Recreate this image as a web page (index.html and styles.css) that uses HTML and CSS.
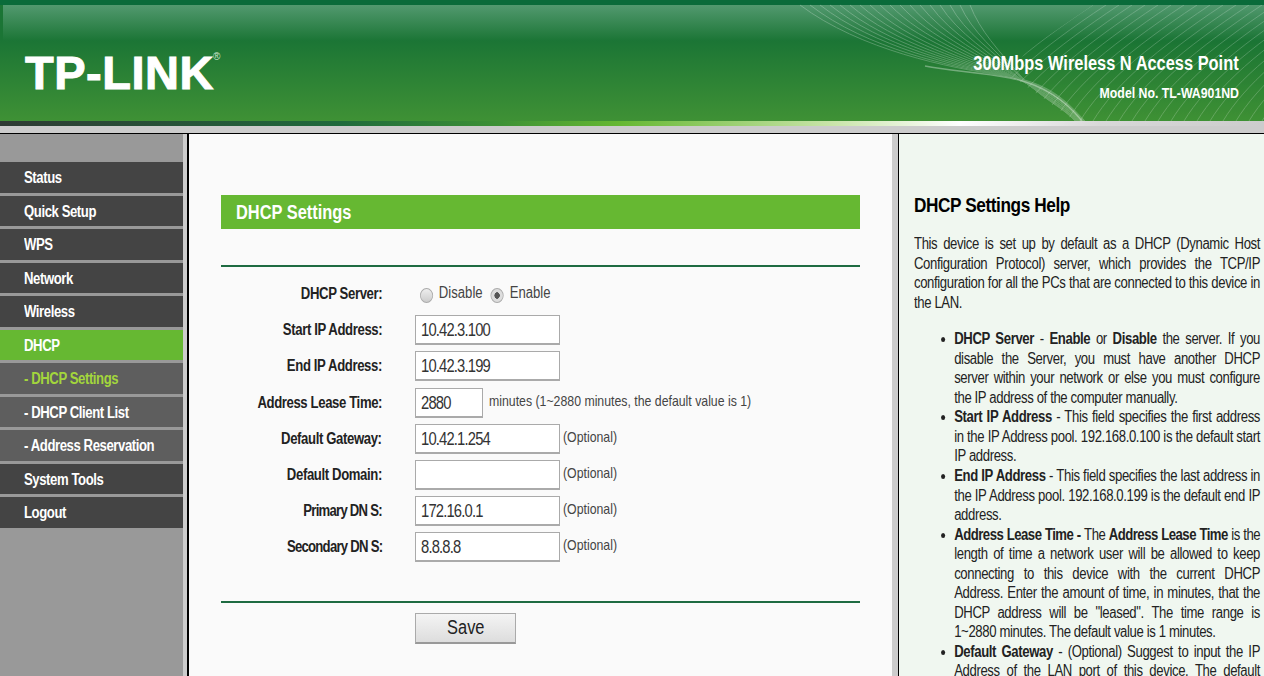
FILE: index.html
```html
<!DOCTYPE html>
<html lang="en">
<head>
    <meta charset="UTF-8">
    <title>TL-WA901ND</title>
    <link rel="stylesheet" href="styles.css">
</head>
<body>
    <div class="banner">
        <div class="banner-shine"></div>
        <svg class="waves" viewBox="0 0 1264 121">
            <defs>
                <path id="wave" d="M963 121C985 85 1025 50 1093 5"/>
                <clipPath id="right-fan"><polygon points="1093,5 1027,50 1010,75 1075,121 1264,121 1264,5"/></clipPath>
            </defs>
            <!-- left fan -->
            <g fill="none" stroke="#fff" stroke-width="1" opacity="0.24">
                <path d="M800 5C860 50 950 68 1000 75S1065 100 1085 121"/>
                <path d="M810 5C867 49 953 67 1001 75S1065 100 1084 121"/>
                <path d="M820 5C874 47 956 66 1002 75S1065 100 1084 121"/>
                <path d="M830 5C881 46 959 65 1003 75S1064 101 1083 121"/>
                <path d="M840 5C888 45 962 64 1005 75S1064 101 1083 121"/>
                <path d="M850 5C895 44 965 63 1006 75S1064 101 1082 121"/>
                <path d="M860 5C902 43 968 62 1007 75S1063 102 1082 121"/>
                <path d="M870 5C909 42 971 61 1008 75S1063 102 1081 121"/>
                <path d="M880 5C916 40 974 60 1009 75S1063 102 1081 121"/>
                <path d="M890 5C923 39 977 59 1010 75S1062 103 1080 121"/>
                <path d="M900 5C930 38 980 58 1011 75S1062 103 1080 121"/>
                <path d="M910 5C937 37 983 57 1013 75S1062 103 1079 121"/>
                <path d="M920 5C944 36 986 56 1014 75S1061 104 1078 121"/>
                <path d="M930 5C951 35 989 55 1015 75S1061 104 1078 121"/>
                <path d="M940 5C958 34 992 54 1016 75S1061 104 1077 121"/>
                <path d="M950 5C965 33 995 53 1018 75S1060 105 1076 121"/>
                <path d="M960 5C972 32 997 52 1019 75S1060 105 1076 121"/>
                <path d="M970 5C980 31 999 51 1020 75S1060 105 1075 121"/>
            </g>
            <!-- right fan -->
            <g fill="none" stroke="#fff" stroke-width="1" opacity="0.2" clip-path="url(#right-fan)">
                <use href="#wave"/>
                <use href="#wave" x="13"/>
                <use href="#wave" x="26"/>
                <use href="#wave" x="39"/>
                <use href="#wave" x="52"/>
                <use href="#wave" x="65"/>
                <use href="#wave" x="78"/>
                <use href="#wave" x="91"/>
                <use href="#wave" x="104"/>
                <use href="#wave" x="117"/>
                <use href="#wave" x="130"/>
                <use href="#wave" x="143"/>
                <use href="#wave" x="156"/>
                <use href="#wave" x="169"/>
                <use href="#wave" x="182"/>
                <use href="#wave" x="195"/>
                <use href="#wave" x="208"/>
                <use href="#wave" x="221"/>
                <use href="#wave" x="234"/>
                <use href="#wave" x="247"/>
                <use href="#wave" x="260"/>
                <use href="#wave" x="273"/>
                <use href="#wave" x="286"/>
                <use href="#wave" x="299"/>
            </g>
            <path d="M925 66C950 71 980 72 1010 78S1065 100 1082 121" fill="none" stroke="#fff" stroke-width="1.5" opacity="0.35"/>
        </svg>
        <div class="logo">TP-LINK<sup>®</sup></div>
        <div class="product">
            <div class="product-name"><span class="nar nar-r">300Mbps Wireless N Access Point</span></div>
            <div class="product-model"><span class="nar nar-r">Model No. TL-WA901ND</span></div>
        </div>
    </div>
    <div class="banner-edge"></div>
    <div class="banner-gap"></div>

    <div class="frames">
        <nav class="menu">
            <a class="item"><span class="nar">Status</span></a>
            <a class="item"><span class="nar">Quick Setup</span></a>
            <a class="item"><span class="nar">WPS</span></a>
            <a class="item"><span class="nar">Network</span></a>
            <a class="item"><span class="nar">Wireless</span></a>
            <a class="item active"><span class="nar">DHCP</span></a>
            <a class="item sub current"><span class="nar">- DHCP Settings</span></a>
            <a class="item sub"><span class="nar">- DHCP Client List</span></a>
            <a class="item sub"><span class="nar">- Address Reservation</span></a>
            <a class="item"><span class="nar">System Tools</span></a>
            <a class="item"><span class="nar">Logout</span></a>
        </nav>

        <main class="main">
            <h1 class="title"><span class="nar">DHCP Settings</span></h1>
            <hr class="rule">
            <form class="form">
                <div class="row">
                    <label><span class="nar nar-r">DHCP Server:</span></label>
                    <div class="field radios">
                        <span class="radio"></span><span class="radio-text">Disable</span>
                        <span class="radio on"></span><span class="radio-text">Enable</span>
                    </div>
                </div>
                <div class="row">
                    <label><span class="nar nar-r">Start IP Address:</span></label>
                    <div class="field"><span class="input"><span class="nar">10.42.3.100</span></span></div>
                </div>
                <div class="row">
                    <label><span class="nar nar-r">End IP Address:</span></label>
                    <div class="field"><span class="input"><span class="nar">10.42.3.199</span></span></div>
                </div>
                <div class="row">
                    <label><span class="nar nar-r">Address Lease Time:</span></label>
                    <div class="field"><span class="input short"><span class="nar">2880</span></span><span class="note wide nar">minutes (1~2880 minutes, the default value is 1)</span></div>
                </div>
                <div class="row">
                    <label><span class="nar nar-r">Default Gateway:</span></label>
                    <div class="field"><span class="input"><span class="nar">10.42.1.254</span></span><span class="note nar">(Optional)</span></div>
                </div>
                <div class="row">
                    <label><span class="nar nar-r">Default Domain:</span></label>
                    <div class="field"><span class="input"></span><span class="note nar">(Optional)</span></div>
                </div>
                <div class="row">
                    <label class="dns"><span class="nar nar-r">Primary DN S:</span></label>
                    <div class="field"><span class="input"><span class="nar">172.16.0.1</span></span><span class="note nar">(Optional)</span></div>
                </div>
                <div class="row">
                    <label class="dns"><span class="nar nar-r">Secondary DN S:</span></label>
                    <div class="field"><span class="input"><span class="nar">8.8.8.8</span></span><span class="note nar">(Optional)</span></div>
                </div>
            </form>
            <hr class="rule rule-low">
            <div class="actions"><button type="button" class="save"><span class="nar nar-c">Save</span></button></div>
        </main>

        <aside class="help">
            <div class="help-body">
                <h2>DHCP Settings Help</h2>
                <p>
                    <span class="ln">This device is set up by default as a DHCP (Dynamic Host</span>
                    <span class="ln">Configuration Protocol) server, which provides the TCP/IP</span>
                    <span class="ln">configuration for all the PCs that are connected to this device in</span>
                    <span class="ln end">the LAN.</span>
                </p>
                <ul>
                    <li>
                        <span class="ln"><b>DHCP Server</b> - <b>Enable</b> or <b>Disable</b> the server. If you</span>
                        <span class="ln">disable the Server, you must have another DHCP</span>
                        <span class="ln">server within your network or else you must configure</span>
                        <span class="ln end">the IP address of the computer manually.</span>
                    </li>
                    <li>
                        <span class="ln"><b>Start IP Address</b> - This field specifies the first address</span>
                        <span class="ln">in the IP Address pool. 192.168.0.100 is the default start</span>
                        <span class="ln end">IP address.</span>
                    </li>
                    <li>
                        <span class="ln"><b>End IP Address</b> - This field specifies the last address in</span>
                        <span class="ln">the IP Address pool. 192.168.0.199 is the default end IP</span>
                        <span class="ln end">address.</span>
                    </li>
                    <li>
                        <span class="ln tight"><b>Address Lease Time - </b>The <b>Address Lease Time</b> is the</span>
                        <span class="ln">length of time a network user will be allowed to keep</span>
                        <span class="ln">connecting to this device with the current DHCP</span>
                        <span class="ln">Address. Enter the amount of time, in minutes, that the</span>
                        <span class="ln">DHCP address will be "leased". The time range is</span>
                        <span class="ln end">1~2880 minutes. The default value is 1 minutes.</span>
                    </li>
                    <li>
                        <span class="ln"><b>Default Gateway</b> - (Optional) Suggest to input the IP</span>
                        <span class="ln">Address of the LAN port of this device. The default</span>
                    </li>
                </ul>
            </div>
        </aside>
    </div>
</body>
</html>
```

FILE: styles.css
```css
html, body { margin: 0; padding: 0; height: 676px; overflow: hidden; }
body { font-family: "Liberation Sans", Arial, sans-serif; font-size: 16px; color: #222; background: #ccc; }

/* the whole UI is squeezed sideways */
.nar { display: inline-block; white-space: nowrap; transform: scaleX(0.82); transform-origin: left center; }
.nar-r { transform-origin: right center; }
.nar-c { transform-origin: center; }

/* top banner */
.banner { position: relative; height: 121px; display: flex; justify-content: space-between; background: linear-gradient(#1b7535 40px, #3f9135 121px); overflow: hidden; }
.banner::before { content: ""; position: absolute; left: 0; right: 0; top: 0; height: 5px; background: #0a6b3a; }
.banner-shine { position: absolute; left: 3px; right: 0; top: 5px; height: 36px; background: linear-gradient(#52996f, #1b7535); }
.waves { position: absolute; left: 0; top: 0; width: 1264px; height: 121px; }
.logo { position: relative; margin: 46px 0 0 25px; font-size: 47px; font-weight: bold; line-height: 54px; color: #fff; letter-spacing: 0.5px; height: 54px; -webkit-text-stroke: 1px #fff; }
.logo sup { position: absolute; left: 188px; top: 6px; font-size: 10px; line-height: 10px; font-weight: normal; letter-spacing: 0; color: #cfe5cf; -webkit-text-stroke: 0; }
.product { position: relative; margin: 50px 25px 0 0; text-align: right; color: #fff; font-weight: bold; }
.product-name { font-size: 20px; line-height: 27px; }
.product-model { margin-top: 6px; font-size: 15px; line-height: 20px; }
.banner-edge { height: 5px; background: linear-gradient(90deg, #2f3a34 0, #1f6a3c 340px, #3d9135 500px, #66b832 620px, #c8e4a8 830px, #fff 960px, #d8d8d8 1100px, #ccc 1264px); }
.banner-gap { height: 7px; background: #ccc; border-bottom: 1px solid #000; }

.frames { display: flex; height: 542px; overflow: hidden; }

/* left menu */
.menu { width: 183px; flex: none; padding-top: 28px; background: #999; border-right: 4px solid #ccc; }
.item { display: block; height: 30.5px; margin-bottom: 3px; padding-left: 24px; line-height: 31px; background: #444; color: #fff; font-size: 16px; font-weight: bold; letter-spacing: -0.5px; }
.item.active { background: #66b832; }
.item.sub { background: #5e5e5e; }
.item.current { color: #a3d63c; }

/* middle frame */
.main { width: 711px; flex: none; box-sizing: border-box; padding: 61px 32px 0; border-left: 2px solid #000; border-right: 6px solid #ccc; background: #fafafa; }
.title { margin: 0; height: 34px; padding-left: 15px; background: #66b832; color: #fff; font-size: 20px; line-height: 34px; font-weight: bold; }
.rule { margin: 36px 0 0; height: 2px; border: 0; background: #1e6b41; }
.rule-low { margin-top: 35px; }
.form { padding-top: 9px; }
.row { display: grid; grid-template-columns: 161px 1fr; column-gap: 33px; align-items: center; height: 36.2px; }
.row label { text-align: right; font-weight: bold; font-size: 16px; letter-spacing: -0.45px; color: #222; }
.row label.dns { letter-spacing: -0.9px; }
.field { display: flex; align-items: center; }
.input { box-sizing: border-box; display: block; flex: none; width: 145px; height: 30px; padding-left: 5px; border: 1px solid #aaa; border-bottom-width: 2px; background: #fff; font-size: 18px; line-height: 29px; letter-spacing: -1px; color: #333; }
.input.short { width: 68px; }
.note { margin-left: 3px; margin-top: -5px; font-size: 15px; color: #444; }
.note.wide { margin-left: 6px; }
.radios { margin-left: 5px; transform: scaleX(0.82); transform-origin: left center; }
.radio { box-sizing: border-box; flex: none; width: 16px; height: 15px; margin-top: 2px; border-radius: 50%; border: 1px solid #aaa; background: linear-gradient(#eee, #ccc); display: block; }
.radio.on { background: radial-gradient(circle, #555 0 3px, #ddd 3.5px); }
.radio-text { margin: -3px 10px 0 7px; font-size: 16px; white-space: nowrap; color: #444; }
.actions { padding: 10px 0 0 194px; }
.save { display: block; width: 101px; height: 31px; padding: 0; border: 1px solid #aaa; border-bottom: 2px solid #999; background: linear-gradient(#f4f4f4, #ddd); font: 20px "Liberation Sans", Arial, sans-serif; color: #222; }

/* help frame */
.help { flex: 1; min-width: 0; box-sizing: border-box; padding: 0 0 0 15px; overflow: hidden; border-left: 1px solid #000; background: #f0f7f0; }
.help-body { width: 422px; transform: scaleX(0.82); transform-origin: left top; color: #222; font-size: 16px; line-height: 19.55px; letter-spacing: -0.45px; }
.help h2 { margin: 57px 0 0; font-size: 21px; line-height: 28px; letter-spacing: -0.5px; color: #000; font-weight: bold; }
.help p { margin: 15px 0 0; }
.help ul { margin: 17px 0 0; padding: 0 0 0 49px; }
.ln { display: block; text-align: justify; text-align-last: justify; white-space: nowrap; }
.ln.tight { letter-spacing: -0.6px; }
.ln.end { text-align-last: left; }
```
